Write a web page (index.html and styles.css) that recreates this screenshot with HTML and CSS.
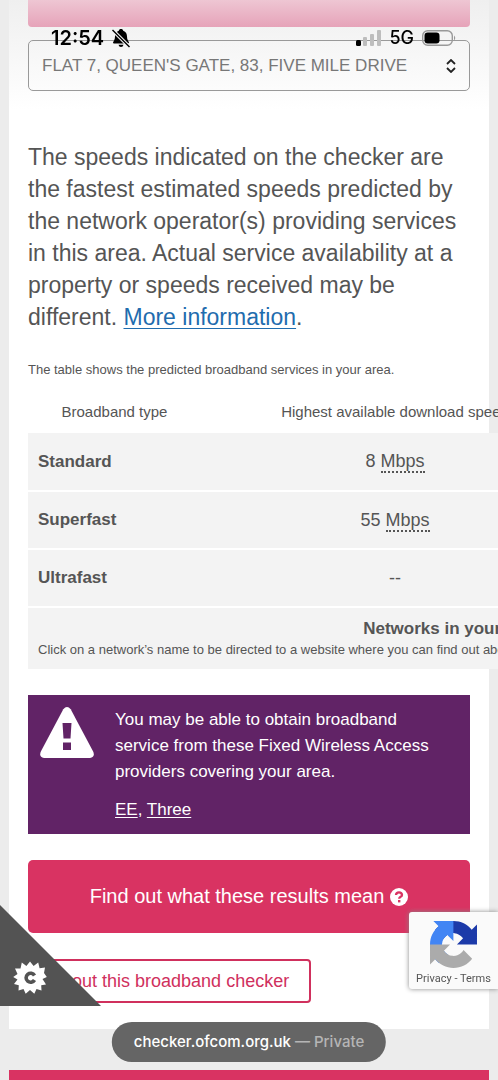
FILE: index.html
```html
<!DOCTYPE html>
<html lang="en">
<head>
<meta charset="utf-8">
<meta name="viewport" content="width=device-width, initial-scale=1">
<title>Broadband checker</title>
<link rel="stylesheet" href="styles.css">
</head>
<body>
<div class="page">
  <main class="card">
    <div class="top-button"></div>
    <select class="address" aria-label="Address">
      <option>FLAT 7, QUEEN'S GATE, 83, FIVE MILE DRIVE</option>
    </select>
    <p class="intro">The speeds indicated on the checker are the fastest estimated speeds predicted by the network operator(s) providing services in this area. Actual service availability at a property or speeds received may be different. <a href="#">More information</a>.</p>
    <p class="note">The table shows the predicted broadband services in your area.</p>
    <table class="speeds">
      <colgroup><col class="col-type"><col class="col-down"><col></colgroup>
      <thead>
        <tr><th>Broadband type</th><th>Highest available download speed</th><td></td></tr>
      </thead>
      <tbody>
        <tr><th>Standard</th><td>8 <abbr>Mbps</abbr></td><td></td></tr>
        <tr><th>Superfast</th><td>55 <abbr>Mbps</abbr></td><td></td></tr>
        <tr><th>Ultrafast</th><td>--</td><td></td></tr>
        <tr><td colspan="3" class="networks"><h2>Networks in your area</h2><p>Click on a network’s name to be directed to a website where you can find out about</p></td></tr>
      </tbody>
    </table>
    <section class="alert">
      <svg class="alert-icon" viewBox="0 0 54 51" aria-hidden="true">
        <path fill="#fff" d="M23.3 2.2Q27-2.2 30.7 2.2L53.4 45Q55 50 50 51H4Q-1 50 .6 45Z"/>
        <path fill="#612366" d="M22.500 16h9l-1 15.500h-7zM23 35.500h8v7.500h-8z"/>
      </svg>
      <div class="alert-text">
        <p>You may be able to obtain broadband service from these Fixed Wireless Access providers covering your area.</p>
        <p><a href="#">EE</a>, <a href="#">Three</a></p>
      </div>
    </section>
    <button class="primary" type="button">Find out what these results mean
      <svg class="help" viewBox="0 0 18 18" aria-hidden="true"><circle cx="9" cy="9" r="9" fill="#fff"/><path d="M6 7Q6.200 4.300 9 4.300T12 6.900Q12 8.200 10.300 9Q9.200 9.600 9.200 10.700" fill="none" stroke="#d93362" stroke-width="2.300"/><path fill="#d93362" d="M8 12h2.400v2.400H8z"/></svg>
    </button>
    <button class="outline" type="button">About this broadband checker</button>
  </main>
  <div class="footer-band"></div>
</div>

<div class="status">
  <span class="status-left">12:54
    <svg class="bell" viewBox="0 0 18 20" aria-hidden="true">
      <path d="M9 1C10.300 1 11 1.700 11.200 2.700C14 3.700 15 5.800 15 8.500C15 12 16.500 13 17 14.500Q17 15.500 16 15.500H2Q1 15.500 1 14.500C1.500 13 3 12 3 8.500C3 5.800 4 3.700 6.800 2.700C7 1.700 7.700 1 9 1ZM6.500 16.800h5Q11 19 9 19T6.500 16.800Z"/>
      <path d="M1 2.500L17 18.500" stroke="#f8f8f8" stroke-width="3.500"/><path d="M.5 2L17.500 19" stroke="#000" stroke-width="1.500"/>
    </svg>
  </span>
  <span class="status-right">
    <svg class="signal" viewBox="0 0 25 16" aria-hidden="true"><rect y="10" width="5" height="6" rx="1.500"/><g fill="#bdbdbd"><rect x="7" y="7" width="4" height="9" rx="1"/><rect x="14" y="4" width="4" height="12" rx="1"/><rect x="21" width="4" height="16" rx="1"/></g></svg>
    <span>5G</span>
    <svg class="battery" viewBox="0 0 35 16" aria-hidden="true"><rect x=".7" y=".7" width="29.600" height="14.600" rx="5" fill="none" stroke="#999" stroke-width="1.400"/><rect x="2.500" y="2.500" width="15" height="11" rx="3.200"/><path d="M32 5.500q2.500 2.500 0 5z" fill="#999"/></svg>
  </span>
</div>

<button class="cookie" type="button" aria-label="Cookie settings">
  <svg viewBox="0 0 101 101" aria-hidden="true">
    <path fill="#535353" d="M0 0L101 101H0Z"/>
    <path fill="#fff" d="M30 56.500L33.600 61L38.200 57.600L39.600 63.300L45 62.600L44 68L46.800 72L42.500 74L46 79.500L41.200 80.200L41.500 85.500L36.500 84L34.300 88.700L30 85L25.700 88.700L23.500 84L18.500 85.500L18.800 80.200L14 79L17.500 74.500L13.200 72L17.500 69L15 63.500L20.500 63.500L21.800 57.600L26.400 61Z"/>
    <path fill="none" stroke="#535353" stroke-width="3.600" d="M34.500 70.500A4.500 4.500 0 1 0 34.500 75"/>
  </svg>
</button>

<aside class="captcha">
  <svg viewBox="0 0 64 64" aria-hidden="true">
    <path fill="#1c3aa9" d="M64 31.955l-.033-1.370V4.687l-7.160 7.160C50.948 4.674 42.033.093 32.050.093c-10.400 0-19.622 4.960-25.458 12.640l11.736 11.860a15.550 15.550 0 0 1 4.754-5.334c2.050-1.600 4.952-2.906 8.968-2.906.485 0 .86.057 1.135.163 4.976.393 9.288 3.140 11.828 7.124l-8.307 8.307z"/>
    <path fill="#4285f4" d="M31.862.094l-1.370.033H4.594l7.160 7.160C4.580 13.147 0 22.060 0 32.046c0 10.400 4.960 19.622 12.640 25.458L24.500 45.768a15.550 15.550 0 0 1-5.334-4.754c-1.600-2.050-2.906-4.952-2.906-8.968 0-.485.057-.86.163-1.135.393-4.976 3.140-9.288 7.124-11.828l8.307 8.307z"/>
    <path fill="#ababab" d="M.001 32.045l.033 1.370v25.898l7.160-7.160c5.860 7.173 14.774 11.754 24.760 11.754 10.400 0 19.622-4.960 25.458-12.640l-11.736-11.860a15.550 15.550 0 0 1-4.754 5.334c-2.050 1.600-4.952 2.906-8.968 2.906-.485 0-.86-.057-1.135-.163-4.976-.393-9.288-3.140-11.828-7.124l8.307-8.307z"/>
  </svg>
  <span><a href="#">Privacy</a> - <a href="#">Terms</a></span>
</aside>

<div class="url-bar"><span>checker.ofcom.org.uk</span> <span class="private">— Private</span></div>
</body>
</html>
```
FILE: styles.css
```css
* { box-sizing: border-box; }

body {
  margin: 0;
  background: #ececec;
  color: #555;
  font-family: "Liberation Sans", Arial, sans-serif;
  overflow: hidden;
}

p, h2 { margin: 0; }

button { font: inherit; }

.page {
  display: flex;
  flex-direction: column;
  height: 100vh;
  padding: 0 9px;
  overflow: hidden;
}

.card {
  flex: none;
  display: flex;
  flex-direction: column;
  padding: 0 19px 26px;
  background: linear-gradient(#efefef, #fff 110px);
}

.top-button {
  height: 27px;
  border-radius: 0 0 4px 4px;
  background: linear-gradient(#eec6d3, #e6a3b9);
}

.address {
  appearance: none;
  width: 100%;
  height: 51px;
  margin-top: 13px;
  padding: 0 13px;
  border: 1px solid #999;
  border-radius: 5px;
  background: transparent url("data:image/svg+xml,%3Csvg xmlns='http://www.w3.org/2000/svg' width='10' height='14' fill='none' stroke='%23222' stroke-width='1.800'%3E%3Cpath d='M1 5l4-4 4 4M1 9l4 4 4-4'/%3E%3C/svg%3E") no-repeat right 13px center;
  color: #777;
  font: 17px "Liberation Sans", Arial, sans-serif;
}

.intro {
  margin-top: 50px;
  font-size: 23px;
  line-height: 32px;
}

.intro a { color: #1f6cae; text-decoration-thickness: 1px; text-underline-offset: 3px; }

.note {
  margin-top: 27px;
  font-size: 13px;
  line-height: 20px;
}

.speeds {
  width: 848px;
  margin-top: 11px;
  table-layout: fixed;
  border-collapse: collapse;
  text-align: center;
  font-size: 18px;
}

.col-type { width: 173px; }
.col-down { width: 388px; }

.speeds thead th {
  height: 42px;
  padding: 0 0 2px;
  font-size: 15px;
  font-weight: normal;
}

.speeds tbody tr { background: #f3f3f3; }
.speeds tbody tr + tr { border-top: 2px solid #fff; }

.speeds tbody th,
.speeds tbody td {
  height: 58px;
  padding: 0 10px;
}

.speeds tbody th { font-size: 17px; text-align: left; }

.speeds abbr { border-bottom: 2px dotted #555; }

.speeds tbody .networks { height: 62px; padding-top: 1px; }

.networks h2 { font-size: 17px; line-height: 22px; }
.networks p { text-align: left; font-size: 13px; line-height: 20px; white-space: nowrap; }

.alert {
  display: flex;
  gap: 21px;
  margin-top: 26px;
  padding: 12px 24px 11px 12px;
  background: #612366;
  color: #fff;
  font-size: 17px;
  line-height: 26px;
}

.alert-icon { flex: none; width: 54px; height: 51px; }
.alert-text { display: grid; gap: 12px; }
.alert a { color: inherit; text-decoration-thickness: 1px; text-underline-offset: 2px; }

.primary {
  display: flex;
  align-items: center;
  justify-content: center;
  gap: 6px;
  height: 73px;
  margin-top: 26px;
  border: 0;
  border-radius: 5px;
  background: #d93362;
  color: #fff;
  font-size: 20px;
}

.help { width: 18px; height: 18px; }

.outline {
  align-self: flex-start;
  height: 44px;
  margin-top: 26px;
  padding: 0 20px;
  border: 2px solid #d0305d;
  border-radius: 4px;
  background: #fff;
  color: #d0305d;
  font-size: 18px;
}

.footer-band {
  flex: 1;
  margin-top: 41px;
  background: #d93362;
}

.status {
  position: fixed;
  top: 26px;
  left: 51px;
  right: 41px;
  display: flex;
  justify-content: space-between;
  color: #000;
  font: 600 20px/24px Inter, sans-serif;
}

.status-left, .status-right { display: flex; align-items: center; gap: 8px; }
.status-right { font-size: 18px; font-weight: 500; }
.bell { width: 18px; height: 20px; }
.signal { width: 25px; height: 16px; }
.battery { width: 35px; height: 16px; }

.cookie {
  position: fixed;
  left: 0;
  bottom: 74px;
  width: 101px;
  height: 101px;
  padding: 0;
  border: 0;
  background: none;
}

.cookie svg { display: block; }

.captcha {
  position: fixed;
  right: 0;
  bottom: 91px;
  display: flex;
  flex-direction: column;
  align-items: center;
  gap: 3px;
  width: 89px;
  height: 77px;
  padding-top: 9px;
  border-radius: 3px 0 0 3px;
  background: #fafafa;
  box-shadow: 0 0 5px #888;
  color: #555;
  font: 11px/16px Roboto, sans-serif;
}

.captcha svg { width: 47px; height: 47px; }
.captcha a { color: inherit; text-decoration: none; }

.url-bar {
  position: fixed;
  bottom: 18px;
  left: 50%;
  transform: translateX(-50%);
  padding: 0 22px;
  border-radius: 20px;
  background: #656565;
  color: #fff;
  font: 500 15px/40px Inter, sans-serif;
  white-space: nowrap;
}

.page .speeds { margin-right: -378px; }

.private { color: #b5b5b5; }
```
